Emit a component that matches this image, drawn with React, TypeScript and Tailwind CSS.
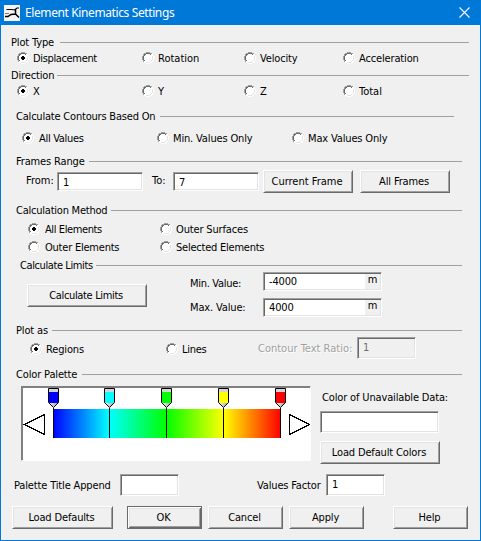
import type { ReactNode } from "react";

const sunken =
  "border-t border-l border-r border-b border-t-[#a0a0a0] border-l-[#a0a0a0] border-r-white border-b-white shadow-[inset_1px_1px_0_#696969,inset_-1px_-1px_0_#e3e3e3]";

function Header({ label, width, className }: { label: string; width: string; className: string }) {
  return (
    <div className={`flex h-[17px] shrink-0 items-center ${className}`}>
      <span className={`shrink-0 ${width}`}>{label}</span>
      <span className="h-px flex-1 bg-[#a0a0a0]" />
    </div>
  );
}

function Radio({ label, checked, width = "", text = "" }: { label: string; checked?: boolean; width?: string; text?: string }) {
  return (
    <label className={`flex shrink-0 items-center gap-1 ${width}`}>
      <svg width="12" height="12" viewBox="0 0 12 12" className="shrink-0" shapeRendering="crispEdges">
        <path d="M4 1h4v1h2v2h1v4h-1v2H8v1H4v-1H2V8H1V4h1V2h2z" fill="#fff" />
        <path d="M4 0h4v1H4zM2 1h2v1H2zM8 1h2v1H8zM1 2h1v2H1zM0 4h1v4H0zM1 8h1v2H1z" fill="#a0a0a0" />
        <path d="M4 1h4v1H4zM2 2h2v1H2zM8 2h1v1H8zM2 3h1v1H2zM1 4h1v4H1zM2 8h1v1H2z" fill="#696969" />
        <path d="M10 2h1v2h1v4h-1v2h-1v1H8v1H4v-1H2v-1h2v1h4v-1h2V8h1V4h-1z" fill="#fff" />
        <path d="M10 4h1v4h-1zM9 8h1v1H9zM4 10h4v1H4zM8 9h1v1H8z" fill="#e3e3e3" />
        {checked && <path d="M5 4h2v1h1v2H7v1H5V7H4V5h1z" fill="#000" />}
      </svg>
      <span className={`translate-y-px ${text}`}>{label}</span>
    </label>
  );
}

function Field({ value, className, unit }: { value?: string; className: string; unit?: string }) {
  return (
    <div className={`flex shrink-0 ${sunken} ${className}`}>
      <span className="flex-1 pl-[5px]">{value}</span>
      {unit && <span className="my-px mr-px w-[15px] bg-[#f0f0f0] text-center leading-[12px]">{unit}</span>}
    </div>
  );
}

function Button({ children, className, primary }: { children: ReactNode; className: string; primary?: boolean }) {
  const edge = primary
    ? "border border-[#696969] shadow-[inset_1px_1px_0_#fff,inset_-1px_-1px_0_#696969,inset_2px_2px_0_#e3e3e3,inset_-2px_-2px_0_#a0a0a0]"
    : "border-t border-l border-r border-b border-t-white border-l-white border-r-[#696969] border-b-[#696969] shadow-[inset_1px_1px_0_#e3e3e3,inset_-1px_-1px_0_#a0a0a0]";
  return (
    <button className={`flex h-[23px] shrink-0 items-center justify-center bg-[#f0f0f0] pr-[2px] ${edge} ${className}`}>
      {children}
    </button>
  );
}

const stops = [
  { x: 32, color: "#0000ff" },
  { x: 88, color: "#00ffff" },
  { x: 145, color: "#00ff00" },
  { x: 202, color: "#ffff00" },
  { x: 259, color: "#ff0000" },
];

function Palette() {
  return (
    <svg width="288" height="73" viewBox="1 1 288 73" className="block">
      <defs>
        <linearGradient id="spectrum">
          {stops.map((s) => (
            <stop key={s.x} offset={(s.x - 32) / 227} stopColor={s.color} />
          ))}
        </linearGradient>
        <linearGradient id="tip">
          <stop offset="0" stopColor="#fff" />
          <stop offset="1" stopColor="#999" />
        </linearGradient>
      </defs>
      <rect x="32" y="23" width="228" height="29" fill="url(#spectrum)" />
      {stops.map((s) => (
        <g key={s.x} transform={`translate(${s.x} 0)`}>
          <path d="M.5 22v30" stroke="#000" />
          <path d="M-4.5 2.5h10v14l-5 5-5-5z" fill="url(#tip)" stroke="#000" />
          <path d="M-4 3h9v3h-9z" fill="#d4d4d4" />
          <path d="M-4 6h9v11h-9z" fill={s.color} />
        </g>
      ))}
      <path d="M3.5 38.5l20-10v20zM288.5 38.5l-20-10v20z" fill="#fff" stroke="#000" shapeRendering="crispEdges" />
    </svg>
  );
}

export default function App() {
  return (
    <div className="flex h-[541px] w-[481px] flex-col overflow-hidden border border-t-0 border-[#0078d7] bg-[#f0f0f0] font-['DejaVu_Sans_Condensed','DejaVu_Sans',sans-serif] text-[11px] leading-[14px] font-normal tracking-[-0.15px] whitespace-nowrap text-black [font-stretch:condensed]">
      <div className="flex h-[25px] shrink-0 items-center bg-[#0078d7] pr-[10px] pl-[3px] text-white">
        <svg width="16" height="16" viewBox="0 0 16 16" className="mr-[5px]">
          <path d="M0 0h16v16H0z" fill="#f4f4f4" />
          <path d="M2.5 4.5h5l3 .5 2.500-2H15" fill="none" stroke="#000" strokeWidth="1.1" />
          <path d="M11.500 4v5L15 12.500M11.500 9L7 9.500 4 11.500H1" fill="none" stroke="#000" strokeWidth="1.5" />
          <path d="M1 8.500h4" fill="none" stroke="#777" />
        </svg>
        <span className="flex-1 font-['Noto_Sans',sans-serif] text-[12px] leading-4 tracking-[-0.39px] [font-stretch:normal]">Element Kinematics Settings</span>
        <svg width="11" height="11" viewBox="0 0 11 11">
          <path d="M.5.5l10 10M10.5.5l-10 10" stroke="#fff" strokeWidth="1.1" />
        </svg>
      </div>

      <Header label="Plot Type" width="w-[49px]" className="mt-[9px] ml-[10px] mr-[11px]" />
      <div className="flex h-[14px] shrink-0 items-center pl-4">
        <Radio label="Displacement" checked width="w-[125px]" text="tracking-[-0.35px]" />
        <Radio label="Rotation" width="w-[102px]" text="tracking-normal" />
        <Radio label="Velocity" width="w-[99px]" />
        <Radio label="Acceleration" />
      </div>
      <Header label="Direction" width="w-[46px]" className="mt-0.5 ml-[10px] mr-[11px]" />
      <div className="flex h-[14px] shrink-0 items-center pl-4">
        <Radio label="X" checked width="w-[125px]" />
        <Radio label="Y" width="w-[102px]" />
        <Radio label="Z" width="w-[99px]" />
        <Radio label="Total" text="tracking-normal" />
      </div>

      <Header label="Calculate Contours Based On" width="w-[144px]" className="mt-[10px] ml-[15px] mr-[26px] tracking-[-0.2px]" />
      <div className="mt-1.5 flex h-[14px] shrink-0 items-center pl-[21px]">
        <Radio label="All Values" checked width="w-[135px]" text="pl-px tracking-[-0.3px]" />
        <Radio label="Min. Values Only" width="w-[135px]" />
        <Radio label="Max Values Only" />
      </div>

      <Header label="Frames Range" width="w-[73px]" className="mt-2 ml-[15px] mr-[18px]" />
      <div className="flex h-[23px] shrink-0 pl-[25px]">
        <span className="mt-1 w-[31px] tracking-normal">From:</span>
        <Field value="1" className="mt-0.5 h-[19px] w-[86px] bg-white leading-[19px]" />
        <span className="mt-1 ml-[9px] w-[21px] tracking-normal">To:</span>
        <Field value="7" className="mt-0.5 h-[19px] w-[86px] bg-white leading-[19px]" />
        <Button className="ml-1 w-[90px] tracking-normal">Current Frame</Button>
        <Button className="ml-[7px] w-[90px]">All Frames</Button>
      </div>

      <Header label="Calculation Method" width="w-[95px]" className="mt-[9px] ml-[15px] mr-[18px] tracking-[-0.23px]" />
      <div className="mt-[3px] grid shrink-0 grid-cols-[132px_1fr] gap-y-1 pl-[27px] *:h-[14px]">
        <Radio label="All Elements" checked text="pl-px tracking-[-0.4px]" />
        <Radio label="Outer Surfaces" />
        <Radio label="Outer Elements" text="pl-px tracking-[-0.22px]" />
        <Radio label="Selected Elements" text="tracking-[-0.23px]" />
      </div>

      <Header label="Calculate Limits" width="w-[76px]" className="mt-[3px] ml-[19px] mr-[18px] tracking-[-0.4px]" />
      <div className="-mt-0.5 flex h-[45px] shrink-0 pl-[26px]">
        <Button className="mt-3 w-[120px] tracking-[-0.35px]">Calculate Limits</Button>
        <div className="ml-[43px] flex w-[73px] flex-col gap-[10px] pt-[5px]">
          <span className="tracking-[-0.3px]">Min. Value:</span>
          <span>Max. Value:</span>
        </div>
        <div className="flex flex-col gap-[7px]">
          <Field value="-4000" unit="m" className="h-[19px] w-[119px] bg-white leading-[18px]" />
          <Field value="4000" unit="m" className="h-[19px] w-[119px] bg-white leading-[18px]" />
        </div>
      </div>

      <Header label="Plot as" width="w-[36px]" className="mt-[5px] ml-[15px] mr-[18px]" />
      <div className="-mt-0.5 flex h-[22px] shrink-0 items-center pl-[29px]">
        <Radio label="Regions" checked width="w-[136px] pt-[2px]" />
        <Radio label="Lines" width="w-[92px] pt-[2px]" text="tracking-[-0.3px]" />
        <span className="w-[99px] shrink-0 pt-[2px] tracking-normal text-[#a0a0a0] [text-shadow:1px_1px_0_#fff]">Contour Text Ratio:</span>
        <Field value="1" className="h-[22px] w-[59px] bg-[#f0f0f0] leading-[19px] text-[#6d6d6d]" />
      </div>

      <Header label="Color Palette" width="w-[66px]" className="mt-[7px] ml-[15px] mr-[18px]" />
      <div className="mt-[3px] flex h-[78px] shrink-0 pl-5">
        <div className="h-[75px] w-[290px] border border-t-[#808080] border-r-white border-b-white border-l-[#808080] bg-white shadow-[inset_1px_1px_0_#808080]">
          <Palette />
        </div>
        <div className="ml-[9px] flex flex-col">
          <span className="mt-[5px] ml-0.5 h-5 w-[118px]">Color of Unavailable Data:</span>
          <Field className="h-[22px] w-[119px] bg-white" />
          <Button className="mt-2 w-[120px]">Load Default Colors</Button>
        </div>
      </div>

      <div className="mt-[10px] flex h-[22px] shrink-0 items-center pl-[13px]">
        <span className="w-[106px] pt-[2px]">Palette Title Append</span>
        <Field className="h-[22px] w-[59px] bg-white" />
        <span className="ml-[78px] w-[69px] pt-[2px]">Values Factor</span>
        <Field value="1" className="h-[22px] w-[59px] bg-white leading-[19px]" />
      </div>

      <div className="mt-[10px] flex shrink-0 pl-[11px]">
        <Button className="w-[101px]">Load Defaults</Button>
        <Button primary className="ml-[14px] w-[75px]">OK</Button>
        <Button className="ml-1.5 w-[75px]">Cancel</Button>
        <Button className="ml-1.5 w-[75px]">Apply</Button>
        <Button className="ml-[29px] w-[75px]">Help</Button>
      </div>
    </div>
  );
}
